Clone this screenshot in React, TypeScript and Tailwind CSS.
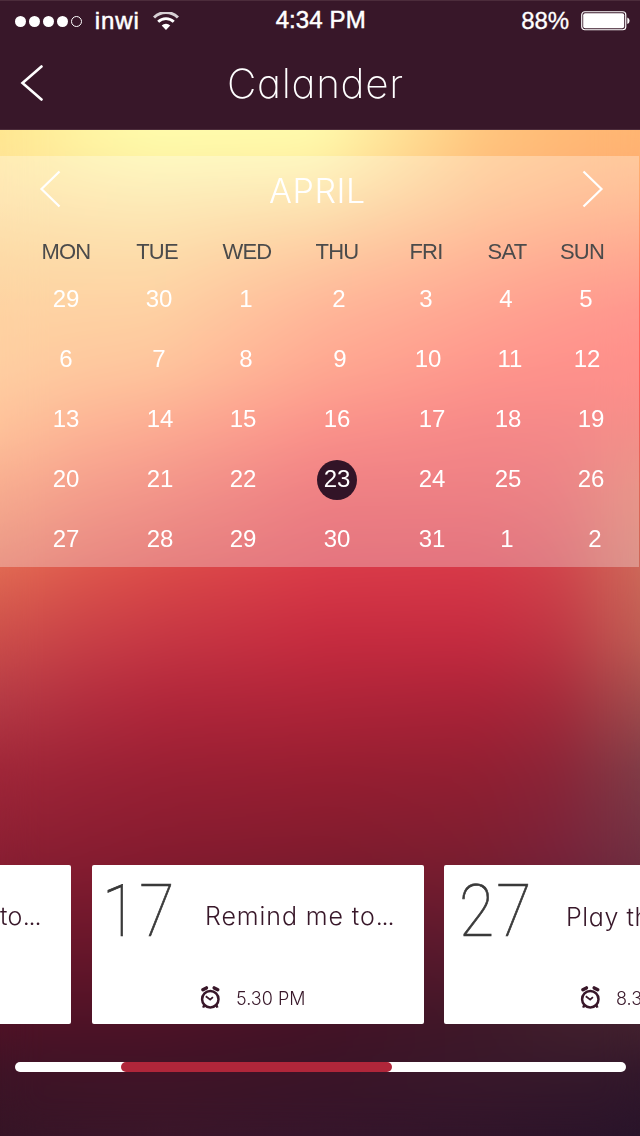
const columns = [
  {
    background:
      "linear-gradient(to bottom,#ffe68f 130px,#ffe494 156px,#fedb94 200px,#fccd83 250px,#fec07a 310px,#feba7a 370px,#fea96f 430px,#f58b60 490px,#e06a53 570px,#cc4f4b 640px,#b63c46 700px,#a02739 770px,#8a1f33 860px,#68162b 950px,#4f1226 1025px,#3f1427 1070px,#351526 1136px)",
  },
  {
    background:
      "linear-gradient(to bottom,#fffdae 130px,#fef8a6 156px,#fde29a 200px,#fdcf87 250px,#febd7b 310px,#ffab72 370px,#fb8663 430px,#ee6858 490px,#db4a48 570px,#c63744 640px,#b2273b 700px,#9a2034 770px,#841b2f 860px,#66162a 950px,#4c1226 1025px,#401326 1070px,#3a172a 1136px)",
    maskImage: "linear-gradient(to right,transparent 0,rgba(0,0,0,.62) 80px,#000 160px)",
  },
  {
    background:
      "linear-gradient(to bottom,#fffbae 130px,#fff5a6 156px,#fcdb94 200px,#feb87a 250px,#ff976d 310px,#ff8362 370px,#f96258 430px,#e84a4f 490px,#d93a48 570px,#c62b3f 640px,#b02539 700px,#981e31 770px,#7f1b2e 860px,#5c162a 950px,#431226 1025px,#3b1427 1070px,#36162c 1136px)",
    maskImage: "linear-gradient(to right,transparent 160px,#000 320px)",
  },
  {
    background:
      "linear-gradient(to bottom,#ffc77e 130px,#ffc27e 156px,#feb577 200px,#ff9a6c 250px,#ff7e63 310px,#ff695b 370px,#f25555 430px,#e74a50 490px,#d63848 570px,#c42b40 640px,#ab2338 700px,#921f32 770px,#7a1e30 860px,#571a2e 950px,#3d1828 1025px,#3a182b 1070px,#30152a 1136px)",
    maskImage: "linear-gradient(to right,transparent 320px,#000 480px)",
  },
  {
    background:
      "linear-gradient(to bottom,#ffbb76 130px,#ffb878 156px,#ffa970 200px,#ff8e66 250px,#ff725f 310px,#ff625a 370px,#f05656 430px,#e34f53 490px,#cf434b 570px,#be3643 640px,#a52b3b 700px,#8b2538 770px,#77223a 860px,#541d2f 950px,#401f2c 1025px,#37192b 1070px,#2c142a 1136px)",
    maskImage: "linear-gradient(to right,transparent 480px,#000 560px)",
  },
  {
    background:
      "linear-gradient(to bottom,#ffb572 130px,#ffb172 156px,#ffa16c 200px,#ff8663 250px,#ff695e 310px,#ff5f59 370px,#ef6058 430px,#de6c59 490px,#cc6b5a 570px,#be6055 640px,#a24f4e 700px,#7f3e48 770px,#6f3042 860px,#50202f 950px,#43222f 1025px,#33182b 1070px,#28142a 1136px)",
    maskImage: "linear-gradient(to right,transparent 560px,#000 640px)",
  },
];

const weekdays = ["MON", "TUE", "WED", "THU", "FRI", "SAT", "SUN"];

const weeks = [
  { days: [29, 30, 1, 2, 3, 4, 5], cols: "grid-cols-[93px_87px_93px_87px_80px_80px_40px]" },
  { days: [6, 7, 8, 9, 10, 11, 12], cols: "grid-cols-[93px_87px_94px_88px_82px_77px_40px]" },
  { days: [13, 14, 15, 16, 17, 18, 19], cols: "grid-cols-[94px_83px_94px_95px_76px_83px_40px]" },
  { days: [20, 21, 22, 23, 24, 25, 26], cols: "grid-cols-[94px_83px_94px_95px_76px_83px_40px]" },
  { days: [27, 28, 29, 30, 31, 1, 2], cols: "grid-cols-[94px_83px_94px_95px_75px_88px_40px]" },
];

function Backdrop() {
  return (
    <div className="absolute inset-0">
      {columns.map((style, i) => (
        <div key={i} className="absolute inset-0" style={style} />
      ))}
      <div className="absolute inset-0 backdrop-blur-[20px]" />
    </div>
  );
}

function AlarmIcon() {
  return (
    <svg width="22" height="24" viewBox="0 0 22 24" fill="none" stroke="#381729" className="-ml-px shrink-0">
      <circle cx="11.3" cy="13.2" r="8.2" strokeWidth="2.5" />
      <path d="M3.9 3.8 7.4 1.9M18.7 3.8 15.2 1.9" strokeWidth="3.4" strokeLinecap="round" />
      <path d="M6.8 10.2 11.2 13.6 13.9 11.2" strokeWidth="1.8" />
      <path d="M5.4 18.6 4.2 21.6M17.2 18.6 18.4 21.6" strokeWidth="2.4" />
    </svg>
  );
}

function StatusBar() {
  return (
    <div className="flex h-10 items-center pl-[15px] pr-[9px] text-2xl leading-10 [-webkit-text-stroke:0.5px_#fff]">
      <div className="flex w-[80px] gap-[3px]">
        <span className="size-[11px] rounded-full bg-white" />
        <span className="size-[11px] rounded-full bg-white" />
        <span className="size-[11px] rounded-full bg-white" />
        <span className="size-[11px] rounded-full bg-white" />
        <span className="size-[11px] rounded-full border border-white" />
      </div>
      <span className="w-[58px] tracking-[0.9px]">inwi</span>
      <svg width="26" height="18" viewBox="0 0 26 18" fill="none" stroke="#fff">
        <path d="M1 5.5a17 17 0 0 1 24 0" strokeWidth="3" opacity=".8" />
        <path d="M5.2 9.8a11 11 0 0 1 15.6 0" strokeWidth="2.8" />
        <path d="M13 18 8.7 13.5a6.3 6.3 0 0 1 8.6 0Z" fill="#fff" stroke="none" />
      </svg>
      <span className="ml-[97px] w-[246px] pb-[2px] tracking-[0.1px] whitespace-nowrap">4:34 PM</span>
      <span className="w-[60px] [-webkit-text-stroke:0.3px_#fff]">88%</span>
      <svg width="50" height="20" viewBox="0 0 50 20" fill="none" className="shrink-0">
        <rect x=".75" y=".75" width="44" height="18" rx="3" stroke="#fff" strokeWidth="1.2" />
        <rect x="2.2" y="2.2" width="41" height="15" rx="2" fill="#fff" />
        <path d="M46.3 6.5a3 3.4 0 0 1 0 6.6Z" fill="#fff" />
      </svg>
    </div>
  );
}

function ReminderCard({ day, title, time, second }: { day: string; title: string; time: string; second?: boolean }) {
  return (
    <div className="flex h-[159px] w-[332px] shrink-0 flex-col rounded-[2px] bg-white text-[#381729]">
      <div className="flex h-[92px]">
        <div className={second ? "w-[122px] pl-[15px]" : "w-[113px] pl-[10px]"}>
          <span className="inline-block origin-left scale-x-[0.88] font-['Roboto',sans-serif] text-[73px] leading-[92px] font-thin tracking-[2.5px] text-[#3a3a3a] [-webkit-text-stroke:0.7px_#3a3a3a]">
            {day}
          </span>
        </div>
        <div
          className={
            second
              ? "pt-[6px] text-[25px] leading-[92px] font-light tracking-[0.6px] whitespace-nowrap"
              : "pt-[5px] text-[25px] leading-[92px] font-light tracking-[0.9px] whitespace-nowrap"
          }
        >
          {title}
          {!second && <span className="tracking-[-1.2px]">...</span>}
        </div>
      </div>
      <div className={second ? "mt-[27px] flex items-center gap-[15px] pl-[136px]" : "mt-[27px] flex items-center gap-[15px] pl-[108px]"}>
        <AlarmIcon />
        <span className="pt-[3px] text-[18px] leading-6 font-light whitespace-nowrap">{time}</span>
      </div>
    </div>
  );
}

export default function App() {
  return (
    <div className="relative h-[1136px] w-[640px] overflow-hidden font-['Liberation_Sans',Arial,sans-serif] text-white antialiased">
      <Backdrop />
      <div className="relative flex h-full flex-col">
        <header className="h-[130px] border-t border-b border-[#4c2c3b] bg-[#381729]">
          <StatusBar />
          <div className="flex h-[84px] items-center">
            <svg width="24" height="36" viewBox="0 0 24 36" fill="none" stroke="#fff" strokeWidth="2.6" className="ml-5">
              <path d="M21.5 1.5 2.5 18 21.5 34.5" strokeLinecap="round" />
            </svg>
            <h1 className="ml-[183px] pt-px font-['Inter',sans-serif] text-[40.5px] leading-[84px] font-extralight tracking-[0.7px] [font-feature-settings:'cv11']">Calander</h1>
          </div>
        </header>

        <section className="mt-[26px] h-[411px] w-[639px] bg-white/30">
          <div className="flex h-[66px] items-center">
            <svg width="24" height="38" viewBox="0 0 24 38" fill="none" stroke="#fff" strokeWidth="2.2" className="ml-[39px]">
              <path d="M20.5 1.5 2.5 19 20.5 36.5" />
            </svg>
            <h2 className="ml-[206px] w-[311px] pt-[3px] font-['Inter',sans-serif] text-[34px] leading-[66px] font-light tracking-[0.6px]">APRIL</h2>
            <svg width="24" height="38" viewBox="0 0 24 38" fill="none" stroke="#fff" strokeWidth="2.2">
              <path d="M3.5 1.5 21.5 19 3.5 36.5" />
            </svg>
          </div>
          <div className="grid h-[47px] grid-cols-[91px_90px_90px_89px_81px_75px_60px] pt-[15px] pl-9 text-[22px] leading-[30px] tracking-[-0.8px] text-[#4b4b4b]">
            {weekdays.map((d) => (
              <span key={d} className="w-[60px] text-center">{d}</span>
            ))}
          </div>
          {weeks.map((week, i) => (
            <div key={i} className={`grid h-[60px] items-center pl-[46px] text-2xl ${week.cols}`}>
              {week.days.map((d, j) => (
                <span
                  key={j}
                  className={
                    d === 23
                      ? "mt-px size-10 rounded-full bg-[#321427] text-center leading-[38px]"
                      : "size-10 text-center leading-10"
                  }
                >
                  {d}
                </span>
              ))}
            </div>
          ))}
        </section>

        <section className="mt-[298px] flex gap-5 font-['Inter',sans-serif] [font-feature-settings:'cv11']">
          <div className="mr-px h-[159px] w-[71px] shrink-0 rounded-r-[2px] bg-white text-[25px] leading-[102px] font-light tracking-[0.3px] text-[#381729]">
            to<span className="tracking-[-1.2px]">...</span>
          </div>
          <ReminderCard day="17" title="Remind me to" time="5.30 PM" />
          <ReminderCard day="27" title="Play the" time="8.30 PM" second />
        </section>

        <div className="mt-[38px] ml-[15px] h-[10px] w-[611px] rounded-full bg-white pl-[106px]">
          <div className="h-[10px] w-[271px] rounded-full bg-[#b0263a]" />
        </div>
      </div>
    </div>
  );
}
